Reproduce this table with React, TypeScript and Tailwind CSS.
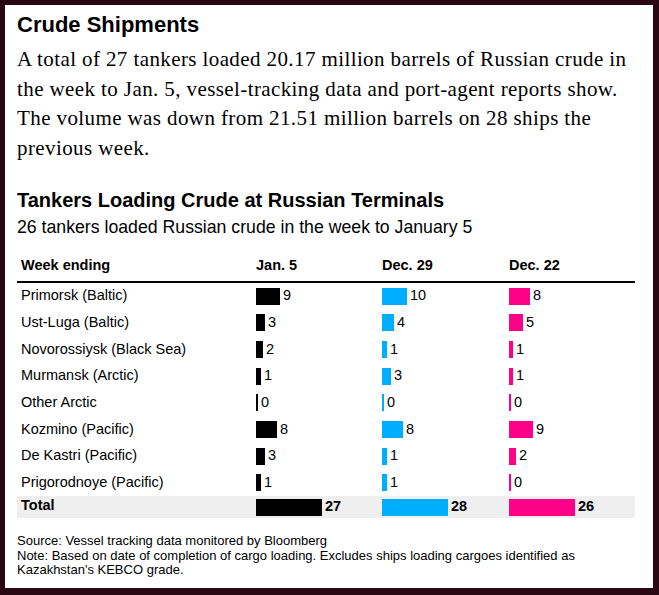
import React from "react";

type Cell = { v: number; w: number };

const rows: { name: string; jan: Cell; dec29: Cell; dec22: Cell }[] = [
  { name: "Primorsk (Baltic)", jan: { v: 9, w: 24 }, dec29: { v: 10, w: 25 }, dec22: { v: 8, w: 21 } },
  { name: "Ust-Luga (Baltic)", jan: { v: 3, w: 9 }, dec29: { v: 4, w: 12 }, dec22: { v: 5, w: 14 } },
  { name: "Novorossiysk (Black Sea)", jan: { v: 2, w: 7 }, dec29: { v: 1, w: 5 }, dec22: { v: 1, w: 4 } },
  { name: "Murmansk (Arctic)", jan: { v: 1, w: 5 }, dec29: { v: 3, w: 9 }, dec22: { v: 1, w: 4 } },
  { name: "Other Arctic", jan: { v: 0, w: 2 }, dec29: { v: 0, w: 2 }, dec22: { v: 0, w: 2 } },
  { name: "Kozmino (Pacific)", jan: { v: 8, w: 21 }, dec29: { v: 8, w: 21 }, dec22: { v: 9, w: 24 } },
  { name: "De Kastri (Pacific)", jan: { v: 3, w: 9 }, dec29: { v: 1, w: 5 }, dec22: { v: 2, w: 7 } },
  { name: "Prigorodnoye (Pacific)", jan: { v: 1, w: 5 }, dec29: { v: 1, w: 5 }, dec22: { v: 0, w: 2 } },
];

const cols = "grid grid-cols-[239px_126px_127px_126px]";

function Bar({ cell, color, bold }: { cell: Cell; color: string; bold?: boolean }) {
  return (
    <div className="flex items-center gap-[3px]">
      <div className={`h-[17px] ${color}`} style={{ width: cell.w }} />
      <span className={bold ? "font-bold" : ""}>{cell.v}</span>
    </div>
  );
}

export default function App() {
  return (
    <div className="w-[659px] h-[595px] bg-[#2a0612] pt-[5px] pl-[5px] pr-[6px] pb-[7px]">
      <div className="h-full bg-white px-[12px] pt-[7px] text-black font-['Liberation_Sans',Arial,sans-serif]">
        <h1 className="text-[22px] leading-[26px] font-bold">Crude Shipments</h1>
        <p className="mt-[7px] text-[21px] leading-[29.5px] tracking-[0.4px] font-['Liberation_Serif',serif]">
          A total of 27 tankers loaded 20.17 million barrels of Russian crude in
          <br />
          the week to Jan. 5, vessel-tracking data and port-agent reports show.
          <br />
          The volume was down from 21.51 million barrels on 28 ships the
          <br />
          previous week.
        </p>

        <h2 className="mt-[25px] text-[20px] leading-[24px] font-bold">Tankers Loading Crude at Russian Terminals</h2>
        <p className="mt-[4px] text-[17.7px] leading-[22px]">26 tankers loaded Russian crude in the week to January 5</p>

        <div className="mt-[18px] w-[618px] text-[14.5px]">
          <div className={`${cols} leading-[18px] font-bold pb-[7px] border-b-2 border-black`}>
            <div className="pl-[4px]">Week ending</div>
            <div>Jan. 5</div>
            <div>Dec. 29</div>
            <div>Dec. 22</div>
          </div>
          {rows.map((r) => (
            <div key={r.name} className={`${cols} h-[26.64px] items-center`}>
              <div className="pl-[4px]">{r.name}</div>
              <Bar cell={r.jan} color="bg-black" />
              <Bar cell={r.dec29} color="bg-[#00aeff]" />
              <Bar cell={r.dec22} color="bg-[#ff0088]" />
            </div>
          ))}
          <div className={`${cols} h-[22px] bg-[#efefef] items-end`}>
            <div className="pl-[4px] pb-[4px] font-bold leading-[18px]">Total</div>
            <Bar cell={{ v: 27, w: 66 }} color="bg-black" bold />
            <Bar cell={{ v: 28, w: 66 }} color="bg-[#00aeff]" bold />
            <Bar cell={{ v: 26, w: 66 }} color="bg-[#ff0088]" bold />
          </div>
        </div>

        <p className="mt-[16px] text-[13px] leading-[14.5px]">
          Source: Vessel tracking data monitored by Bloomberg
          <br />
          Note: Based on date of completion of cargo loading. Excludes ships loading cargoes identified as
          <br />
          Kazakhstan's KEBCO grade.
        </p>
      </div>
    </div>
  );
}
